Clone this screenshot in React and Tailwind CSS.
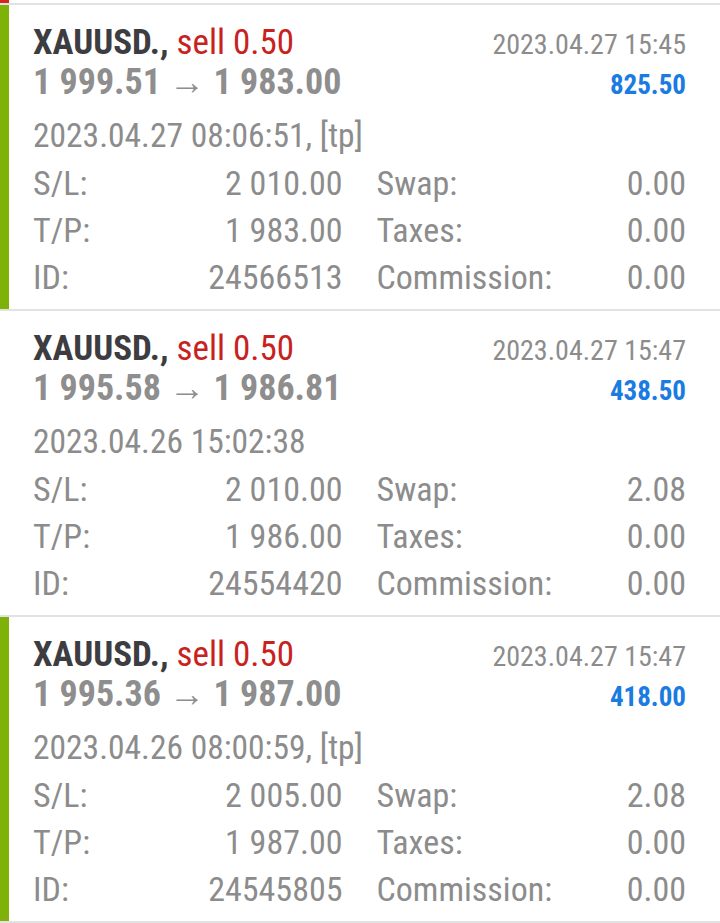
const deals = [
  {
    bar: true,
    open: "1 999.51",
    close: "1 983.00",
    closeTime: "2023.04.27 15:45",
    profit: "825.50",
    openTime: "2023.04.27 08:06:51, [tp]",
    sl: "2 010.00",
    tp: "1 983.00",
    id: "24566513",
    swap: "0.00",
  },
  {
    bar: false,
    open: "1 995.58",
    close: "1 986.81",
    closeTime: "2023.04.27 15:47",
    profit: "438.50",
    openTime: "2023.04.26 15:02:38",
    sl: "2 010.00",
    tp: "1 986.00",
    id: "24554420",
    swap: "2.08",
  },
  {
    bar: true,
    open: "1 995.36",
    close: "1 987.00",
    closeTime: "2023.04.27 15:47",
    profit: "418.00",
    openTime: "2023.04.26 08:00:59, [tp]",
    sl: "2 005.00",
    tp: "1 987.00",
    id: "24545805",
    swap: "2.08",
  },
];

function Row({ label, value, label2, value2 }) {
  return (
    <div className="grid grid-cols-2 gap-x-[34px] h-[47px] leading-[46px] text-[34px] text-[#8c8c8c]">
      <div className="flex justify-between">
        <span>{label}</span>
        <span>{value}</span>
      </div>
      <div className="flex justify-between">
        <span>{label2}</span>
        <span>{value2}</span>
      </div>
    </div>
  );
}

function Deal({ deal }) {
  return (
    <div className="flex h-[306px] border-b-2 border-[#e2e2e2]">
      <div className={"w-[9px] " + (deal.bar ? "bg-[#7fb209]" : "bg-white")} />
      <div className="flex-1 pl-[24px] pr-[34px] pt-[15px]">
        <div className="flex items-baseline justify-between h-[44px] leading-[46px]">
          <span className="text-[35px] font-bold text-[#3c3c41]">
            XAUUSD.,{" "}
            <span className="font-normal text-[#c8221e]">sell 0.50</span>
          </span>
          <span className="text-[28px] text-[#8c8c8c]">{deal.closeTime}</span>
        </div>
        <div className="flex items-baseline justify-between h-[36px] leading-[36px]">
          <span className="text-[36px] font-bold text-[#8e8e8e]">
            {deal.open} → {deal.close}
          </span>
          <span className="text-[27px] font-bold text-[#1a7be0]">{deal.profit}</span>
        </div>
        <div className="mt-[10px] h-[50px] leading-[51px] text-[33.5px] text-[#8c8c8c]">
          {deal.openTime}
        </div>
        <Row label="S/L:" value={deal.sl} label2="Swap:" value2={deal.swap} />
        <Row label="T/P:" value={deal.tp} label2="Taxes:" value2="0.00" />
        <Row label="ID:" value={deal.id} label2="Commission:" value2="0.00" />
      </div>
    </div>
  );
}

export default function App() {
  return (
    <div
      className="w-[720px] h-[923px] overflow-hidden bg-white"
      style={{ fontFamily: "'Roboto Condensed', Roboto, sans-serif" }}
    >
      <div className="h-[5px] border-b-2 border-[#e2e2e2]">
        <div className="w-[9px] h-[3px] bg-[#d7261e]" />
      </div>
      {deals.map((d, i) => (
        <Deal key={i} deal={d} />
      ))}
      <div className="w-[9px] h-[3px] bg-[#7fb209]" />
    </div>
  );
}
